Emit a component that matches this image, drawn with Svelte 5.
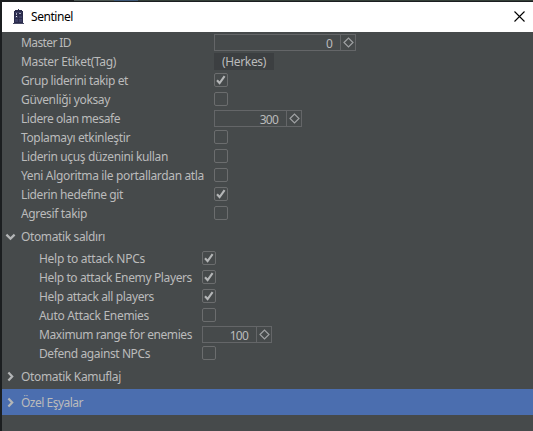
<script>
  const main = [
    { label: 'Master ID', kind: 'spin', value: '0', width: 142, ink: 50 },
    { label: 'Master Etiket(Tag)', kind: 'button', value: '(Herkes)', ink: 95 },
    { label: 'Grup liderini takip et', kind: 'check', on: true, ink: 107 },
    { label: 'Güvenliği yoksay', kind: 'check', ink: 89 },
    { label: 'Lidere olan mesafe', kind: 'spin', value: '300', width: 88, ink: 99 },
    { label: 'Toplamayı etkinleştir', kind: 'check', ink: 109 },
    { label: 'Liderin uçuş düzenini kullan', kind: 'check', ink: 147 },
    { label: 'Yeni Algoritma ile portallardan atla', kind: 'check', ink: 183 },
    { label: 'Liderin hedefine git', kind: 'check', on: true, ink: 102 },
    { label: 'Agresif takip', kind: 'check', ink: 66 }
  ];
  const attack = [
    { label: 'Help to attack NPCs', kind: 'check', on: true, ink: 106 },
    { label: 'Help to attack Enemy Players', kind: 'check', on: true, ink: 153 },
    { label: 'Help attack all players', kind: 'check', on: true, ink: 115 },
    { label: 'Auto Attack Enemies', kind: 'check', ink: 110 },
    { label: 'Maximum range for enemies', kind: 'spin', value: '100', width: 70, ink: 153 },
    { label: 'Defend against NPCs', kind: 'check', ink: 111 }
  ];

  function fit(node, width) {
    const natural = node.getBoundingClientRect().width;
    node.style.letterSpacing = `${(width - natural) / node.textContent.length}px`;
  }
</script>

{#snippet text(value, width)}
  <span class="text" use:fit={width}>{value}</span>
{/snippet}

{#snippet row(item)}
  <div class="row">
    <div class="label">{@render text(item.label, item.ink)}</div>
    {#if item.kind === 'spin'}
      <div class="spin" style:width="{item.width}px">
        <div class="value">{@render text(item.value, item.value.length * 6.1)}</div>
        <div class="knob">
          <svg width="11" height="11" viewBox="0 0 11 11"><path d="M1 5.5 5.5 1 10 5.5 5.5 10Z" fill="none" stroke="#a0a2a4" stroke-width="1.15" /></svg>
        </div>
      </div>
    {:else if item.kind === 'button'}
      <div class="button">{@render text(item.value, 44)}</div>
    {:else}
      <div class="check">
        {#if item.on}
          <svg width="12" height="12" viewBox="0 0 12 12"><path d="M2 6.2 4.6 9 9.6 2.2" fill="none" stroke="#b4b6b7" stroke-width="2.1" /></svg>
        {/if}
      </div>
    {/if}
  </div>
{/snippet}

{#snippet header(title, width, open, selected)}
  <div class="header" class:selected>
    <svg width="11" height="12" viewBox="0 0 11 12">
      {#if open}
        <path d="M1.4 4.6 5.5 8.6 9.6 4.6" fill="none" stroke="#b4b6b7" stroke-width="2.2" />
      {:else}
        <path d="M3.4 2.4 7.2 6.4 3.4 10.4" fill="none" stroke="#b4b6b7" stroke-width="2.2" />
      {/if}
    </svg>
    {@render text(title, width)}
  </div>
{/snippet}

<div class="backdrop">
  <div class="strip"><i class="dark"></i><i class="green"></i><i class="blue"></i><i class="rest"></i></div>
  <div class="window">
    <div class="titlebar">
      <svg class="logo" width="11" height="16" viewBox="0 0 11 16" shape-rendering="crispEdges">
        <path d="M5 0h1v1h3v1h1v12h1v1H0v-1h1V2h1V1h3Z" fill="#292b4b" />
        <path d="M2 3h7v1H2ZM2 7h3v2H2ZM6 7h3v2H6ZM2 10h3v3H2ZM6 10h3v3H6Z" fill="#3c3e63" />
        <path d="M3 4h1v2H3ZM6 4h2v1H6Z" fill="#a7a8c0" />
        <path d="M3 7h1v1H3Z" fill="#f0f0f5" />
        <path d="M0 14h11v1H0Z" fill="#4a4b66" />
      </svg>
      <span class="title">{@render text('Sentinel', 42)}</span>
      <svg class="close" width="11" height="11" viewBox="0 0 11 11"><path d="M.5.5l10 10M10.5.5l-10 10" stroke="#000" stroke-width="1.1" /></svg>
    </div>
    <div class="body">
      {#each main as item}{@render row(item)}{/each}
      {@render header('Otomatik saldırı', 84, true, false)}
      <div class="nested">
        {#each attack as item}{@render row(item)}{/each}
      </div>
      {@render header('Otomatik Kamuflaj', 100, false, false)}
      {@render header('Özel Eşyalar', 62, false, true)}
    </div>
  </div>
</div>

<style>
  .backdrop {
    width: 533px;
    height: 431px;
    display: flex;
    flex-direction: column;
    box-sizing: border-box;
    padding-left: 2px;
    background: #1b1e20;
    overflow: hidden;
    font: 12px/18px 'Noto Sans', 'Open Sans', sans-serif;
    color: #bbbbbb;
  }
  .strip { height: 2px; display: flex; flex: none; }
  .strip i { height: 1px; }
  .dark { width: 72px; background: #1b1e20; }
  .green { width: 40px; background: #4b5551; }
  .blue { width: 24px; background: #3d5878; }
  .rest { flex: 1; background: #344038; }
  .window { flex: 1; display: flex; flex-direction: column; background: #464a4b; }
  .titlebar {
    height: 30px;
    display: flex;
    align-items: center;
    padding: 0 8px 0 11px;
    background: #fff;
    color: #000;
  }
  .logo { margin-top: -1px; }
  .title { margin-left: 7px; flex: 1; }
  .close { margin-top: -2px; }
  .body { padding-top: 1px; }
  .text { display: inline-block; white-space: pre; }
  .row { display: flex; height: 19px; align-items: center; padding-left: 19px; }
  .label { width: 193px; height: 18px; flex: none; }
  .nested .row { padding-left: 37px; }
  .nested .label { width: 163px; }
  .spin {
    height: 17px;
    box-sizing: border-box;
    display: flex;
    border: 1px solid #646668;
    line-height: 17px;
  }
  .value { flex: 1; text-align: right; padding-right: 8px; }
  .knob {
    width: 14px;
    border-left: 1px solid #646668;
    display: flex;
    align-items: center;
    justify-content: center;
  }
  .button { width: 60px; height: 17px; background: #3c3f41; text-align: center; line-height: 17px; }
  .check {
    width: 14px;
    height: 14px;
    box-sizing: border-box;
    border: 1px solid #6b6d6e;
    border-radius: 2px;
    display: flex;
    margin-top: -1px;
  }
  .header { height: 26px; display: flex; align-items: center; gap: 5px; padding-left: 3px; }
  .header svg { margin-top: -1px; }
  .header .text { padding-top: 2px; }
  .selected { background: #4b6eaf; }
</style>
